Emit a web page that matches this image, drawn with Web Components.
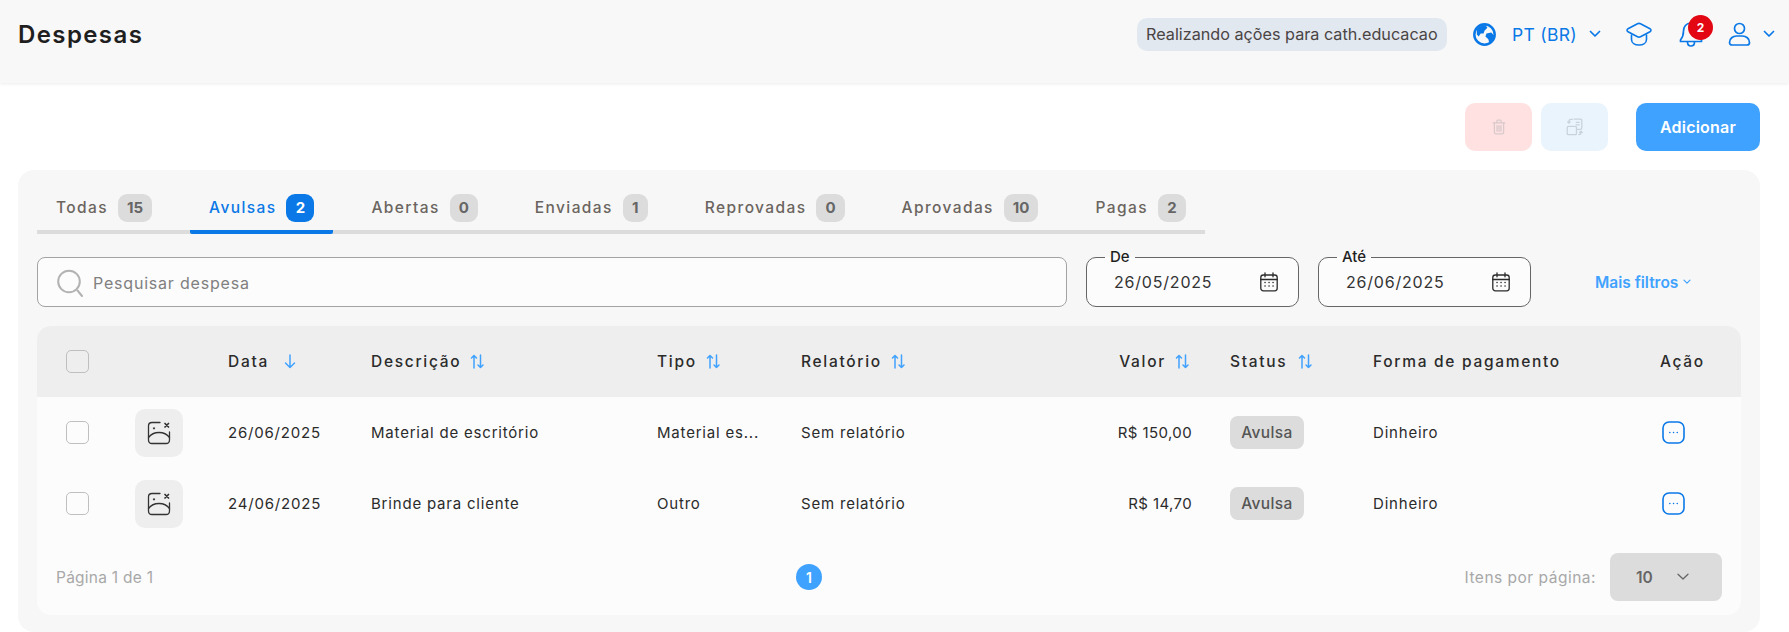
<!DOCTYPE html>
<html lang="pt-BR">
<head>
<meta charset="utf-8">
<title>Despesas</title>
<style>
  html, body { margin: 0; height: 632px; overflow: hidden; background: #fff; }
  body { font-family: Inter, "Noto Sans", sans-serif; }
</style>
</head>
<body>
<app-header title="Despesas"></app-header>
<action-bar></action-bar>
<expense-panel>
  <expense-tabs></expense-tabs>
  <expense-filters></expense-filters>
  <expense-table></expense-table>
</expense-panel>

<script>
const icons = {
  globe: `<svg width="25" height="25" viewBox="0 0 26 26"><circle cx="13" cy="13" r="10.6" fill="none" stroke="#0a78e6" stroke-width="2.6"/><path d="M5 8c2-3 5-5 9-5l2 3-3 3-1 3-3 0-2 3-2-2zM15 12l5-1 3 3-2 5-3 3-1-4-3-3z" fill="#0a78e6"/></svg>`,
  chevron: `<svg width="12" height="8" viewBox="0 0 12 8" fill="none"><path d="M1.5 1.5 6 6l4.500-4.500" stroke="#0a78e6" stroke-width="1.7" stroke-linecap="round" stroke-linejoin="round"/></svg>`,
  cap: `<svg width="26" height="24" viewBox="0 0 26 24" fill="none" stroke="#0a78e6" stroke-width="1.600" stroke-linejoin="round" stroke-linecap="round"><path d="M11.500 1.700c1-.5 2-.5 3 0l9.500 5c1.300.7 1.300 2.300 0 3l-9.500 5c-1 .5-2 .5-3 0L2 9.700C.7 9 .7 7.400 2 6.700z"/><path d="M5.500 13v4.500c0 3.500 3.500 5.500 7.500 5.500s7.500-2 7.500-5.500V13"/></svg>`,
  bell: `<svg width="26" height="28" viewBox="0 0 26 28" fill="none" stroke="#0a78e6" stroke-width="1.700" stroke-linejoin="round" stroke-linecap="round"><path d="M13 3C8 3 5.500 7 5.500 11c0 4-1 6.500-3 9v1.500h21V20c-2-2.500-3-5-3-9 0-4-2.500-8-7.500-8z"/><path d="M9.500 22c0 2.500 1.500 4 3.500 4s3.500-1.500 3.500-4"/></svg>`,
  user: `<svg width="23" height="24" viewBox="0 0 23 24" fill="none" stroke="#0a78e6" stroke-width="1.700" stroke-linejoin="round"><circle cx="11.500" cy="6.500" r="5"/><path d="M1.500 20.500c0-4 3.500-6.500 7-6.500h6c3.500 0 7 2.500 7 6.500 0 1.500-1 2.500-2.500 2.500H4c-1.500 0-2.500-1-2.500-2.500z"/></svg>`,
  trash: `<svg width="14" height="16" viewBox="0 0 16 19" fill="none" stroke="#d9c9cb" stroke-width="1.500" stroke-linecap="round" stroke-linejoin="round"><path d="M1 4.500h14M5.500 4.500V2.300c0-.7.500-1.100 1-1.100h3c.5 0 1 .4 1 1.100v2.200"/><path d="M2.500 4.500v11.300c0 1.200 1 2 2 2h7c1 0 2-.8 2-2V4.500"/><path d="M5.700 8v6.500M8 8v6.500M10.300 8v6.500"/></svg>`,
  swap: `<svg width="17" height="18" viewBox="0 0 19 21" fill="none" stroke="#c9d2da" stroke-width="1.500" stroke-linecap="round" stroke-linejoin="round"><path d="M9 1.200h7.500c1 0 1.500.5 1.500 1.500v9c0 1-.5 1.500-1.500 1.500H13"/><path d="M11.500 5h3.500M11.500 8h3.500"/><path d="M1 11c0-.8.500-1.300 1.300-1.300h8.200c.8 0 1.300.5 1.300 1.300v7c0 1-.5 1.500-1.300 1.500H2.300C1.500 19.500 1 19 1 18z"/><path d="M7 1.500H5C3.500 1.500 3 2.500 3 4v2M1.500 4.500 3 6l1.500-1.500"/><path d="M14.500 19.500H15c1.500 0 2-1 2-2v-1.500M15.500 17l1.500-1.500 1.500 1.500"/></svg>`,
  search: `<svg width="26" height="28" viewBox="0 0 26 28" fill="none" stroke="#b2b2b2" stroke-width="2" stroke-linecap="round"><circle cx="12" cy="12.500" r="10.800"/><path d="M20.500 21.500 25 27"/></svg>`,
  calendar: `<svg width="18" height="20" viewBox="0 0 18 20" fill="none" stroke="#2b2b2b" stroke-width="1.300" stroke-linecap="round"><rect x=".8" y="3" width="16.400" height="15.800" rx="2.500"/><path d="M.8 7.500h16.400M5 .8v4M13 .8v4"/><path d="M5 10.500h.1M9 10.500h.1M13 10.500h.1M5 14h.1M9 14h.1M13 14h.1" stroke-width="1.500"/></svg>`,
  smallChevron: `<svg width="8" height="6" viewBox="0 0 8 6" fill="none"><path d="M1 1.200 4 4.200l3-3" stroke="#40a2ff" stroke-width="1.200" stroke-linecap="round" stroke-linejoin="round"/></svg>`,
  sortBoth: `<svg width="15" height="15" viewBox="0 0 15 15" fill="none" stroke="#40a2ff" stroke-width="1.500" stroke-linecap="round" stroke-linejoin="round"><path d="M4 14V1.500M1.500 4 4 1.500 6.500 4"/><path d="M10.500 1v12.500M8 11l2.500 2.500L13 11"/></svg>`,
  sortDown: `<svg width="12" height="15" viewBox="0 0 12 15" fill="none" stroke="#40a2ff" stroke-width="1.500" stroke-linecap="round" stroke-linejoin="round"><path d="M6 1v12.500M1.500 9 6 13.500 10.500 9"/></svg>`,
  noImage: `<svg width="24" height="24" viewBox="0 0 24 24" fill="none" stroke="#333" stroke-width="1.300" stroke-linecap="round" stroke-linejoin="round"><path d="M13 1.500H5C2.800 1.500 1.500 2.800 1.500 5v14c0 2.200 1.300 3.500 3.500 3.500h14c2.200 0 3.500-1.300 3.500-3.500v-8"/><path d="M1.500 16.500C4 13 8 11.500 12 11.500s8 1.500 10.500 5"/><path d="M6.300 7.300h1.400M7 6.600v1.400" stroke-width="1"/><path d="M18 2.500l3.500 3.500M21.500 2.500 18 6" stroke-width="1.700"/></svg>`,
  more: `<svg width="23" height="23" viewBox="0 0 23 23" fill="none" stroke="#0a78e6"><rect x="1" y="1" width="21" height="21" rx="6" stroke-width="1.600"/><path d="M7.800 11.500h.1M11.500 11.500h.1M15.200 11.500h.1" stroke-width="1.500" stroke-linecap="round"/></svg>`,
  pageChevron: `<svg width="12" height="8" viewBox="0 0 12 8" fill="none"><path d="M1 1.300 6 6l5-4.700" stroke="#666" stroke-width="1.300" stroke-linecap="round" stroke-linejoin="round"/></svg>`
};

const tableCols = '98px 93px 143px 286px 144px 250px 141px 38px 143px 287px 81px';

class AppHeader extends HTMLElement {
  constructor() {
    super();
    this.attachShadow({ mode: 'open' }).innerHTML = `
      <style>
        :host {
          display: flex;
          align-items: center;
          justify-content: space-between;
          box-sizing: border-box;
          height: 83px;
          padding: 0 14px 15px 18px;
          background: #f8f8f8;
          box-shadow: 0 1px 3px rgba(0, 0, 0, .08);
          position: relative;
          font-family: Inter, sans-serif;
        }
        h1 { margin: 0; font-size: 24px; font-weight: 600; letter-spacing: 1.4px; color: #1f1f1f; }
        .right { display: flex; align-items: center; }
        .chip {
          box-sizing: border-box;
          height: 33px;
          width: 310px;
          padding: 0 9px;
          display: flex;
          align-items: center;
          white-space: nowrap;
          border-radius: 10px;
          background: #e2e8f0;
          font-size: 16.200px;
          color: #4a4444;
          margin-right: 25px;
        }
        .lang { font-size: 17.500px; color: #0a78e6; margin: 0 12px 0 15px; letter-spacing: .3px; }
        .cap { margin: 0 26px 0 25px; display: flex; }
        .bell { position: relative; display: flex; width: 26px; margin-right: 24px; }
        .badge {
          position: absolute;
          left: 10px;
          top: -5px;
          width: 25px;
          height: 25px;
          border-radius: 50%;
          background: #e30613;
          color: #fff;
          font-size: 12px;
          font-weight: 700;
          display: flex;
          align-items: center;
          justify-content: center;
        }
        .user { display: flex; margin-right: 12px; }
        svg { display: block; }
      </style>
      <h1>${this.getAttribute('title')}</h1>
      <div class="right">
        <span class="chip">Realizando ações para cath.educacao</span>
        ${icons.globe}
        <span class="lang">PT (BR)</span>
        ${icons.chevron}
        <span class="cap">${icons.cap}</span>
        <span class="bell">${icons.bell}<span class="badge">2</span></span>
        <span class="user">${icons.user}</span>
        ${icons.chevron}
      </div>`;
  }
}

class ActionBar extends HTMLElement {
  constructor() {
    super();
    this.attachShadow({ mode: 'open' }).innerHTML = `
      <style>
        :host {
          display: flex;
          justify-content: flex-end;
          box-sizing: border-box;
          height: 87px;
          padding: 20px 29px 0 0;
          font-family: Inter, sans-serif;
        }
        button {
          border: 0;
          height: 48px;
          width: 67px;
          border-radius: 10px;
          display: flex;
          align-items: center;
          justify-content: center;
          font-family: inherit;
          padding: 0;
        }
        .del { background: #ffe1e1; margin-right: 9px; }
        .swap { background: #eaf4fd; margin-right: 28px; }
        .add { background: #40a2ff; width: 124px; color: #fff; font-size: 16px; font-weight: 600; letter-spacing: .2px; }
      </style>
      <button class="del">${icons.trash}</button>
      <button class="swap">${icons.swap}</button>
      <button class="add">Adicionar</button>`;
  }
}

class ExpensePanel extends HTMLElement {
  constructor() {
    super();
    this.attachShadow({ mode: 'open' }).innerHTML = `
      <style>
        :host {
          display: block;
          box-sizing: border-box;
          height: 462px;
          margin: 0 29px 0 18px;
          padding: 24px 19px 17px;
          border-radius: 16px;
          background: #f7f7f7;
          font-family: Inter, sans-serif;
        }
      </style>
      <slot></slot>`;
  }
}

class ExpenseTabs extends HTMLElement {
  constructor() {
    super();
    const tabs = [['Todas', 15], ['Avulsas', 2, true], ['Abertas', 0], ['Enviadas', 1], ['Reprovadas', 0], ['Aprovadas', 10], ['Pagas', 2]];
    this.attachShadow({ mode: 'open' }).innerHTML = `
      <style>
        :host {
          display: flex;
          width: fit-content;
          gap: 19px;
          height: 36px;
          border-bottom: 4px solid #dcdcdc;
        }
        .tab {
          display: flex;
          align-items: flex-start;
          box-sizing: border-box;
          height: 40px;
          padding: 0 19px;
          gap: 10px;
          border-bottom: 4px solid transparent;
          color: #6b6560;
          font-size: 15.500px;
          font-weight: 500;
          letter-spacing: 1.4px;
          line-height: 28px;
          border-radius: 2px;
        }
        .tab b {
          min-width: 28px;
          height: 28px;
          box-sizing: border-box;
          padding: 0 9px;
          border-radius: 9px;
          background: #dcdcdc;
          color: #666;
          font-size: 15px;
          font-weight: 700;
          letter-spacing: 0;
          text-align: center;
        }
        .tab b.thin { min-width: 25px; padding: 0 8px; }
        .on { color: #0a78e6; border-bottom-color: #0a78e6; }
        .on b { background: #0a78e6; color: #fff; }
      </style>
      ${tabs.map(([label, n, on]) => `<div class="tab ${on ? 'on' : ''}">${label}<b class="${n === 1 ? 'thin' : ''}">${n}</b></div>`).join('')}`;
  }
}

class ExpenseFilters extends HTMLElement {
  constructor() {
    super();
    this.attachShadow({ mode: 'open' }).innerHTML = `
      <style>
        :host {
          display: flex;
          align-items: center;
          height: 50px;
          margin: 23px 0 19px;
        }
        .search {
          box-sizing: border-box;
          width: 1030px;
          height: 50px;
          display: flex;
          align-items: center;
          gap: 10px;
          padding: 2px 0 0 19px;
          background: #fcfcfc;
          border: 1px solid #a3a3a3;
          border-radius: 8px;
          color: #808080;
          font-size: 16px;
          letter-spacing: .8px;
          margin-right: 19px;
        }
        .more {
          display: flex;
          align-items: center;
          gap: 5px;
          margin-left: 45px;
          color: #40a2ff;
          font-size: 15.500px;
          font-weight: 600;
        }
        svg { display: block; }
      </style>
      <div class="search">${icons.search}<span>Pesquisar despesa</span></div>
      <date-field label="De" value="26/05/2025"></date-field>
      <date-field label="Até" value="26/06/2025"></date-field>
      <span class="more">Mais filtros ${icons.smallChevron}</span>`;
  }
}

class DateField extends HTMLElement {
  constructor() {
    super();
    this.attachShadow({ mode: 'open' }).innerHTML = `
      <style>
        :host {
          display: block;
          box-sizing: border-box;
          width: 213px;
          height: 50px;
          margin-right: 19px;
          position: relative;
          background: #fcfcfc;
          border: 1px solid #666;
          border-radius: 10px;
        }
        .label {
          position: absolute;
          left: 18px;
          top: -9px;
          padding: 0 5px;
          background: linear-gradient(#f7f7f7 50%, #fcfcfc 50%);
          color: #1f1f1f;
          font-size: 15px;
          font-weight: 500;
          line-height: 16px;
        }
        .body {
          display: flex;
          align-items: center;
          justify-content: space-between;
          height: 100%;
          padding: 0 20px 0 27px;
          color: #333;
          font-size: 16px;
          letter-spacing: .8px;
        }
        svg { display: block; }
      </style>
      <span class="label">${this.getAttribute('label')}</span>
      <div class="body"><span>${this.getAttribute('value')}</span>${icons.calendar}</div>`;
  }
}

class ExpenseTable extends HTMLElement {
  constructor() {
    super();
    this.attachShadow({ mode: 'open' }).innerHTML = `
      <style>
        :host {
          display: block;
          border-radius: 14px;
          overflow: hidden;
          background: #fcfcfc;
          height: 289px;
        }
        .head {
          display: grid;
          grid-template-columns: ${tableCols};
          align-items: center;
          height: 71px;
          background: #eeeeee;
          color: #2b2b2b;
          font-size: 15.500px;
          font-weight: 500;
          letter-spacing: 1.7px;
        }
        .head > div { display: flex; align-items: center; gap: 9px; white-space: nowrap; }
        .head .end { justify-content: flex-end; padding-right: 2px; }
        .head .status { grid-column: 9; gap: 11px; }
        .head .down { gap: 15px; }
        .box {
          box-sizing: border-box;
          width: 23px;
          height: 23px;
          margin-left: 29px;
          border: 1px solid #bfbfbf;
          border-radius: 5px;
        }
        footer {
          display: grid;
          grid-template-columns: 740px auto 1fr;
          align-items: center;
          height: 76px;
          padding: 0 19px;
          color: #a8a8a8;
          font-size: 15.500px;
        }
        .page-label { letter-spacing: .25px; }
        .pg {
          width: 26px;
          height: 26px;
          border-radius: 50%;
          background: #40a2ff;
          color: #fff;
          font-weight: 600;
          font-size: 14px;
          display: flex;
          align-items: center;
          justify-content: center;
        }
        .per { display: flex; justify-content: flex-end; align-items: center; gap: 14px; letter-spacing: .5px; }
        .sel {
          box-sizing: border-box;
          width: 112px;
          height: 48px;
          display: flex;
          align-items: center;
          gap: 24px;
          padding-left: 26px;
          border-radius: 8px;
          background: #dcdcdc;
          color: #666;
          font-weight: 600;
          letter-spacing: 0;
        }
        svg { display: block; }
      </style>
      <div class="head">
        <div><span class="box"></span></div>
        <div></div>
        <div class="down"><span>Data</span>${icons.sortDown}</div>
        <div><span>Descrição</span>${icons.sortBoth}</div>
        <div><span>Tipo</span>${icons.sortBoth}</div>
        <div><span>Relatório</span>${icons.sortBoth}</div>
        <div class="end"><span>Valor</span>${icons.sortBoth}</div>
        <div class="status"><span>Status</span>${icons.sortBoth}</div>
        <div>Forma de pagamento</div>
        <div>Ação</div>
      </div>
      <expense-row date="26/06/2025" desc="Material de escritório" type="Material es..." value="R$ 150,00"></expense-row>
      <expense-row date="24/06/2025" desc="Brinde para cliente" type="Outro" value="R$ 14,70"></expense-row>
      <footer>
        <span class="page-label">Página 1 de 1</span>
        <span class="pg">1</span>
        <div class="per"><span>Itens por página:</span><span class="sel">10 ${icons.pageChevron}</span></div>
      </footer>`;
  }
}

class ExpenseRow extends HTMLElement {
  constructor() {
    super();
    const a = (n) => this.getAttribute(n);
    this.attachShadow({ mode: 'open' }).innerHTML = `
      <style>
        :host {
          display: grid;
          grid-template-columns: ${tableCols};
          align-items: center;
          height: 71px;
          color: #2b2b2b;
          font-size: 15px;
          letter-spacing: .8px;
          white-space: nowrap;
        }
        .box {
          box-sizing: border-box;
          width: 23px;
          height: 23px;
          margin-left: 29px;
          border: 1px solid #bfbfbf;
          border-radius: 5px;
        }
        .thumb {
          width: 48px;
          height: 48px;
          border-radius: 10px;
          background: #eeeeee;
          display: flex;
          align-items: center;
          justify-content: center;
        }
        .val { text-align: right; letter-spacing: .4px; }
        status-pill { grid-column: 9; justify-self: start; }
        .act { margin-left: 2px; display: flex; }
        svg { display: block; }
      </style>
      <span class="box"></span>
      <span class="thumb">${icons.noImage}</span>
      <span>${a('date')}</span>
      <span>${a('desc')}</span>
      <span>${a('type')}</span>
      <span>Sem relatório</span>
      <span class="val">${a('value')}</span>
      <status-pill>Avulsa</status-pill>
      <span>Dinheiro</span>
      <span class="act">${icons.more}</span>`;
  }
}

class StatusPill extends HTMLElement {
  constructor() {
    super();
    this.attachShadow({ mode: 'open' }).innerHTML = `
      <style>
        :host {
          display: flex;
          align-items: center;
          justify-content: center;
          box-sizing: border-box;
          width: 74px;
          height: 33px;
          border-radius: 8px;
          background: #dcdcdc;
          color: #555;
          font-weight: 500;
          font-size: 15.500px;
          letter-spacing: .4px;
        }
      </style>
      <slot></slot>`;
  }
}

customElements.define('app-header', AppHeader);
customElements.define('action-bar', ActionBar);
customElements.define('expense-panel', ExpensePanel);
customElements.define('expense-tabs', ExpenseTabs);
customElements.define('expense-filters', ExpenseFilters);
customElements.define('date-field', DateField);
customElements.define('expense-row', ExpenseRow);
customElements.define('status-pill', StatusPill);
customElements.define('expense-table', ExpenseTable);
</script>
</body>
</html>
